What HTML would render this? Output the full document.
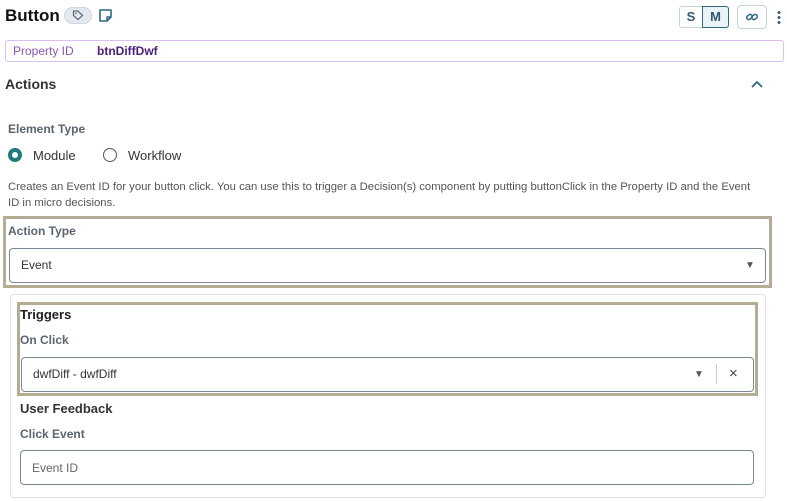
<!DOCTYPE html>
<html><head><style>
*{box-sizing:border-box;margin:0;padding:0}
body{width:787px;height:501px;background:#fff;font-family:"Liberation Sans",sans-serif;position:relative;overflow:hidden;color:#222}
.a{position:absolute}
.lbl{font-size:12px;font-weight:bold;color:#5b6470}
.cond{font-family:"Liberation Sans Narrow","Liberation Sans",sans-serif}
</style></head><body>
<div class="a" style="left:5px;top:6px;font-size:17px;font-weight:bold;color:#111">Button</div>
<div class="a" style="left:64px;top:7px;width:28px;height:17px;border-radius:9px;background:#e3e8ee;border:1px solid #cfd6de"></div>
<svg class="a" style="left:72px;top:9px" width="12" height="12" viewBox="0 0 12 12"><path d="M1.5 6.5V2h4.5l4.5 4.5-4.5 4z" fill="none" stroke="#4a5a6a" stroke-width="1.1"/><circle cx="4" cy="4.3" r=".8" fill="#4a5a6a"/></svg>
<svg class="a" style="left:98px;top:8px" width="15" height="15" viewBox="0 0 15 15"><path d="M2 2h11v7l-4 4H2z M9 13v-4h4" fill="none" stroke="#2d6a80" stroke-width="1.6" stroke-linejoin="round"/></svg>
<div class="a" style="left:679px;top:6px;width:24px;height:22px;border:1px solid #c6d4dc;border-radius:3px 0 0 3px;font-size:13px;font-weight:bold;color:#2d5a70;text-align:center;line-height:20px">S</div>
<div class="a" style="left:702px;top:6px;width:27px;height:22px;border:1px solid #2d6a80;border-radius:0 3px 3px 0;background:#eaf3f6;font-size:13px;font-weight:bold;color:#2d5a70;text-align:center;line-height:20px">M</div>
<div class="a" style="left:737px;top:5px;width:30px;height:24px;border:1px solid #c6d4dc;border-radius:4px"></div>
<svg class="a" style="left:745px;top:10px" width="14" height="14" viewBox="0 0 14 14"><g fill="none" stroke="#2d6a80" stroke-width="1.5"><rect x="1.5" y="5" width="6" height="4" rx="2" transform="rotate(-35 4.5 7)"/><rect x="6.5" y="5" width="6" height="4" rx="2" transform="rotate(-35 9.5 7)"/></g></svg>
<div class="a" style="left:777px;top:10px;width:4px;height:14px;background:radial-gradient(circle,#2d5a70 1.3px,transparent 1.6px) 0 0/4px 5px"></div>
<div class="a" style="left:5px;top:40px;width:779px;height:22px;border:1px solid #dcc0f2;border-radius:3px"></div>
<div class="a" style="left:13px;top:44px;font-size:12px;color:#8a55b0">Property ID</div>
<div class="a" style="left:97px;top:44px;font-size:12px;font-weight:bold;color:#4b1f78">btnDiffDwf</div>
<div class="a" style="left:5px;top:76px;font-size:14px;font-weight:bold;color:#333">Actions</div>
<svg class="a" style="left:750px;top:79px" width="14" height="10" viewBox="0 0 14 10"><path d="M2 8l5-5 5 5" fill="none" stroke="#2d6a80" stroke-width="1.8"/></svg>
<div class="a lbl" style="left:8px;top:122px">Element Type</div>
<div class="a" style="left:8px;top:148px;width:14px;height:14px;border-radius:50%;border:4px solid #1f7a80"></div>
<div class="a" style="left:33px;top:148px;font-size:13px;color:#333">Module</div>
<div class="a" style="left:103px;top:148px;width:14px;height:14px;border-radius:50%;border:1px solid #555"></div>
<div class="a" style="left:128px;top:148px;font-size:13px;color:#333">Workflow</div>
<div class="a" style="left:8px;top:179px;width:755px;font-size:11.3px;line-height:16px;color:#555">Creates an Event ID for your button click. You can use this to trigger a Decision(s) component by putting buttonClick in the Property ID and the Event ID in micro decisions.</div>
<div class="a" style="left:3px;top:216px;width:769px;height:72px;border:3px solid #b5ad93"></div>
<div class="a lbl cond" style="left:8px;top:224px">Action Type</div>
<div class="a" style="left:9px;top:248px;width:757px;height:35px;border:1px solid #7a8794;border-radius:4px"></div>
<div class="a cond" style="left:21px;top:258px;font-size:12px;color:#333">Event</div>
<div class="a" style="left:745px;top:260px;font-size:10px;color:#555">▼</div>
<div class="a" style="left:10px;top:294px;width:756px;height:204px;border:1px solid #dde4ea;border-radius:4px"></div>
<div class="a" style="left:17px;top:302px;width:741px;height:94px;border:3px solid #b5ad93"></div>
<div class="a cond" style="left:20px;top:307px;font-size:13px;font-weight:bold;color:#222">Triggers</div>
<div class="a lbl cond" style="left:20px;top:333px">On Click</div>
<div class="a" style="left:21px;top:357px;width:733px;height:35px;border:1px solid #7a8794;border-radius:4px"></div>
<div class="a cond" style="left:33px;top:367px;font-size:12px;color:#333">dwfDiff - dwfDiff</div>
<div class="a" style="left:694px;top:369px;font-size:10px;color:#555">▼</div>
<div class="a" style="left:716px;top:364px;width:1px;height:20px;background:#ccc"></div>
<div class="a" style="left:729px;top:365px;font-size:15px;color:#444">×</div>
<div class="a" style="left:20px;top:401px;font-size:13px;font-weight:bold;color:#333">User Feedback</div>
<div class="a lbl" style="left:20px;top:427px">Click Event</div>
<div class="a" style="left:20px;top:450px;width:734px;height:35px;border:1px solid #7a8794;border-radius:4px"></div>
<div class="a" style="left:32px;top:461px;font-size:12px;color:#666">Event ID</div>
</body></html>
